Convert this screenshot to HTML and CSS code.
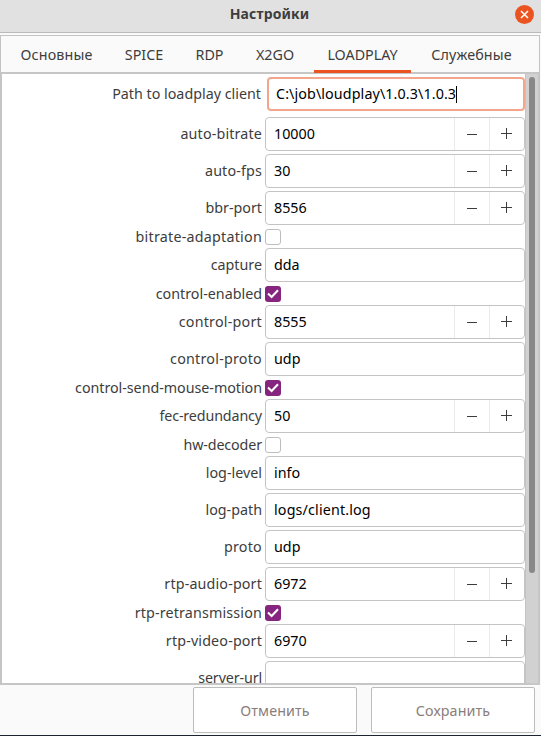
FILE: index.html
```html
<!DOCTYPE html>
<html lang="ru">
<head>
<meta charset="utf-8">
<title>Настройки</title>
<link rel="stylesheet" href="styles.css">
</head>
<body>
<svg class="defs" aria-hidden="true">
  <symbol id="minus" viewBox="0 0 12 12"><path d="M1 6.5H11" /></symbol>
  <symbol id="plus" viewBox="0 0 12 12"><path d="M0 5.5H11M5.5 0V11" /></symbol>
  <symbol id="tick" viewBox="0 0 16 16"><path d="M3 7.5L6.6 11L13 4.2" /></symbol>
</svg>
<div class="window">
  <header class="titlebar">
    <h1>Настройки</h1>
    <button class="close" aria-label="Закрыть"><svg viewBox="0 0 19 19"><path d="M6 6L13 13M13 6L6 13" /></svg></button>
  </header>
  <main class="notebook">
    <nav class="tabs">
      <a class="tab first">Основные</a><a class="tab">SPICE</a><a class="tab">RDP</a><a class="tab">X2GO</a><a class="tab active">LOADPLAY</a><a class="tab last">Служебные</a>
    </nav>
    <div class="scroller">
      <form class="form">
        <div class="row path"><label>Path to loadplay client</label><div class="field focus"><span>C:\job\loudplay\1.0.3\1.0.3</span><i class="caret"></i></div></div>
        <div class="row"><label class="wide">auto-bitrate</label><div class="field spin"><span>10000</span><b><svg><use href="#minus"/></svg></b><b><svg><use href="#plus"/></svg></b></div></div>
        <div class="row"><label class="wide">auto-fps</label><div class="field spin"><span>30</span><b><svg><use href="#minus"/></svg></b><b><svg><use href="#plus"/></svg></b></div></div>
        <div class="row"><label>bbr-port</label><div class="field spin"><span>8556</span><b><svg><use href="#minus"/></svg></b><b><svg><use href="#plus"/></svg></b></div></div>
        <div class="row short"><label class="wider">bitrate-adaptation</label><div class="check"></div></div>
        <div class="row"><label>capture</label><div class="field"><span>dda</span></div></div>
        <div class="row short"><label>control-enabled</label><div class="check on"><svg><use href="#tick"/></svg></div></div>
        <div class="row"><label class="wider">control-port</label><div class="field spin"><span>8555</span><b><svg><use href="#minus"/></svg></b><b><svg><use href="#plus"/></svg></b></div></div>
        <div class="row"><label class="wider">control-proto</label><div class="field"><span>udp</span></div></div>
        <div class="row short"><label class="tight">control-send-mouse-motion</label><div class="check on"><svg><use href="#tick"/></svg></div></div>
        <div class="row"><label class="tighter">fec-redundancy</label><div class="field spin"><span>50</span><b><svg><use href="#minus"/></svg></b><b><svg><use href="#plus"/></svg></b></div></div>
        <div class="row short"><label class="tighter">hw-decoder</label><div class="check"></div></div>
        <div class="row"><label>log-level</label><div class="field"><span>info</span></div></div>
        <div class="row"><label>log-path</label><div class="field"><span class="wide">logs/client.log</span></div></div>
        <div class="row"><label class="wider">proto</label><div class="field"><span>udp</span></div></div>
        <div class="row"><label class="wide">rtp-audio-port</label><div class="field spin"><span>6972</span><b><svg><use href="#minus"/></svg></b><b><svg><use href="#plus"/></svg></b></div></div>
        <div class="row short"><label class="wide">rtp-retransmission</label><div class="check on"><svg><use href="#tick"/></svg></div></div>
        <div class="row"><label class="wide">rtp-video-port</label><div class="field spin"><span>6970</span><b><svg><use href="#minus"/></svg></b><b><svg><use href="#plus"/></svg></b></div></div>
        <div class="row"><label class="tighter">server-url</label><div class="field"></div></div>
      </form>
      <div class="scrollbar"><div class="thumb"></div></div>
    </div>
  </main>
  <footer class="actions"><button>Отменить</button><button>Сохранить</button></footer>
</div>
</body>
</html>
```
FILE: styles.css
```css
* { box-sizing: border-box; }
body { margin: 0; font: 14.3px/17px "Noto Sans", "Open Sans", sans-serif; color: #3d3d3d; }
.defs { position: absolute; width: 0; height: 0; }
.window { width: 541px; height: 736px; display: flex; flex-direction: column; background: #fafafa; border-bottom: 1px solid #1d2430; overflow: hidden; }
button { font: inherit; padding: 0; }
.titlebar { flex: none; height: 33px; display: grid; grid-template-columns: 33px 1fr 33px; align-items: center; background: #e1e1e1; border-bottom: 1px solid #bababa; padding-bottom: 4px; }
.titlebar h1 { grid-column: 2; margin: 0 0 0 -2px; padding-bottom: 2px; text-align: center; font-size: 14px; font-weight: 700; letter-spacing: 0.1px; color: #3d3d3d; }
.close { width: 19px; height: 19px; margin-left: 6.5px; border: 0; border-radius: 50%; background: #e95420; }
.close svg { display: block; width: 19px; height: 19px; fill: none; stroke: #fff; stroke-width: 1.5; }
.notebook { flex: none; width: 540px; height: 650px; margin-top: 2px; border: 1px solid #c4c4c4; border-bottom: 0; }
.tabs { height: 38px; display: grid; grid-template-columns: 97px 62px 53px 62px 97px 105px; column-gap: 8px; padding-left: 7px; border-bottom: 2px solid #c6c6c6; }
.tab { height: 37px; padding-top: 10px; text-align: center; }
.first, .last { letter-spacing: 0.15px; }
.active { border-bottom: 3px solid #e95420; }
.scroller { height: 611px; display: flex; justify-content: space-between; background: #fff; border: 1px solid #c6c6c6; border-top: 0; border-bottom-width: 2px; overflow: hidden; }
.form { width: 523px; height: 609px; padding-top: 3px; display: flex; flex-direction: column; gap: 3px; overflow: hidden; }
.row { flex: none; height: 34px; display: grid; grid-template-columns: 260px 260px; column-gap: 3px; align-items: center; }
.short { height: 17px; }
.path { margin-bottom: 3px; grid-template-columns: 259px 258px; column-gap: 6px; }
.row label { text-align: right; white-space: nowrap; padding-bottom: 2px; }
.short label { padding-bottom: 0; }
.wide { letter-spacing: 0.15px; }
.wider { letter-spacing: 0.23px; }
.tight { letter-spacing: -0.04px; }
.tighter { letter-spacing: -0.13px; }
.field { height: 34px; display: flex; align-items: center; border: 1px solid #c4c4c4; border-radius: 4px; padding-left: 8px; color: #000; background: #fff; }
.field span { padding-bottom: 2px; }
.focus { border: 2px solid #f4a68c; padding-left: 7px; letter-spacing: 0.1px; }
.caret { width: 1px; height: 17px; background: #000; }
.spin span { flex: 1; }
.spin b { width: 35px; height: 32px; border-left: 1px solid #ebebeb; display: grid; place-items: center; }
.spin svg { width: 12px; height: 12px; fill: none; stroke: #3d3d3d; stroke-width: 1; }
.check { width: 16px; height: 16px; border: 1px solid #bdbdbd; border-radius: 3px; }
.on { border: 0; background: #862580; }
.on svg { display: block; width: 16px; height: 16px; fill: none; stroke: #fff; stroke-width: 2; }
.scrollbar { width: 13px; background: #d1d1d1; border-left: 1px solid #c4c4c4; padding: 3px 0 0 3px; }
.thumb { width: 6px; height: 496px; border-radius: 3px; background: #888; }
.actions { display: flex; gap: 14px; padding: 2px 0 0 193px; }
.actions button { width: 164px; height: 46px; border: 1px solid #bcbcbc; border-radius: 2px; background: #fff; color: #8a7d7a; letter-spacing: 0.1px; }
```
